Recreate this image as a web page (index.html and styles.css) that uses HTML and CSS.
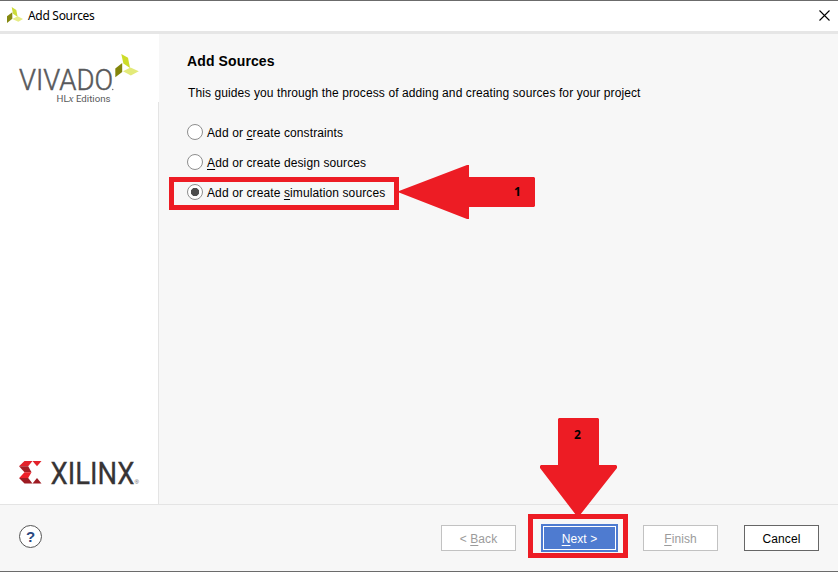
FILE: index.html
```
<!DOCTYPE html>
<html lang="en">
<head>
<meta charset="utf-8">
<title>Add Sources</title>
<link rel="stylesheet" href="styles.css">
</head>
<body>
<div class="dialog">
  <header class="titlebar">
    <svg class="app-icon" width="16" height="16" viewBox="0 0 24 24">
      <path fill="#cddc39" d="M7 0l7 4.500 2 10.500-7-5z"/>
      <path fill="#858911" d="M0 14l8-6v9.500L0 24z"/>
      <path fill="#e6ec84" d="M8 18l8-4 8 4-7 4z"/>
    </svg>
    <span class="window-title">Add Sources</span>
    <svg class="close" width="11" height="11" viewBox="0 0 11 11"><path d="M.5.5l10 10M10.500.5l-10 10" stroke="#000" stroke-width="1.100"/></svg>
  </header>
  <div class="content">
    <aside class="sidebar">
      <svg class="vivado" width="159" height="68" viewBox="0 34 159 68">
        <text class="vivado-name" x="19" y="90" textLength="94" lengthAdjust="spacingAndGlyphs">VIVADO</text>
        <circle cx="112.700" cy="89.500" r=".8" fill="#77787b"/>
        <text class="vivado-edition" x="56.500" y="101.500" textLength="54" lengthAdjust="spacingAndGlyphs">HL<tspan class="italic-x">x</tspan> Editions</text>
        <path fill="#cddc29" d="M121.300 54l6.700 3.800 2 10.200-6.600-4.400z"/>
        <path fill="#82850b" d="M115.300 68.500l6.900-5.500v9l-6.900 5.200z"/>
        <path fill="#e3ea79" d="M123 71.200l7.500-3.700 8.300 3.700-8 4.300z"/>
      </svg>
      <svg class="xilinx" width="122" height="28" viewBox="18 458 122 28">
        <path fill="#e3222b" d="M24.500 461h8l-4.300 5.200h-9.200z"/>
        <path fill="#e3222b" d="M32.500 461h9l-4.500 5.200z"/>
        <path fill="#a51e25" d="M19 466.200h9.200l3.300 6.100h-7z"/>
        <path fill="#ed2029" d="M24.500 472.300h7l-3.300 5.700h-9z"/>
        <path fill="#9e1b22" d="M19 478h9.200l4.300 5.500h-8z"/>
        <path fill="#9e1b22" d="M37 478l4.500 5.500h-9z"/>
        <text class="xilinx-name" x="50.500" y="483.500" textLength="84" lengthAdjust="spacingAndGlyphs">XILINX</text>
        <text class="registered" x="134.500" y="484">®</text>
      </svg>
    </aside>
    <main class="panel">
      <h1>Add Sources</h1>
      <p class="intro">This guides you through the process of adding and creating sources for your project</p>
      <div class="options">
        <div class="option"><i class="radio"></i><span>Add or <u>c</u>reate constraints</span></div>
        <div class="option"><i class="radio"></i><span><u>A</u>dd or create design sources</span></div>
        <div class="option"><i class="radio checked"></i><span>Add or create <u>s</u>imulation sources</span></div>
      </div>
    </main>
  </div>
  <footer class="footer">
    <span class="help">?</span>
    <div class="buttons">
      <button class="btn disabled back">&lt; <u>B</u>ack</button>
      <button class="btn primary"><span><u>N</u>ext &gt;</span></button>
      <button class="btn disabled finish"><u>F</u>inish</button>
      <button class="btn cancel">Cancel</button>
    </div>
  </footer>
  <svg class="annotations" width="838" height="572" viewBox="0 0 838 572">
    <g fill="none" stroke="#ed1c24" stroke-width="5">
      <path d="M171.500 179.500h225v28h-225z"/>
      <path d="M530.500 516.500h95v39h-95z"/>
    </g>
    <g fill="#ed1c24">
      <path d="M399 192.500v-1.500l68-26h2v12h65l1 1v28l-1 1h-65v12h-2z"/>
      <path d="M559 418h39l1 1v46h17l1 1v2l-37 47h-4l-36-47v-2l1-1h17v-46z"/>
    </g>
    <text class="step" x="514" y="196">1</text>
    <text class="step" x="574" y="439">2</text>
  </svg>
</div>
</body>
</html>
```
FILE: styles.css
```
* { box-sizing: border-box; }
body { margin: 0; font: 12px/16px "Liberation Sans", sans-serif; color: #000; }
u { text-decoration: underline; text-underline-offset: 2px; text-decoration-thickness: 1px; text-decoration-skip-ink: none; }
.dialog { position: relative; width: 838px; height: 572px; display: flex; flex-direction: column; background: #f7f7f7; border-top: 1px solid #6b6b6b; border-bottom: 1px solid #6b6b6b; overflow: hidden; }
.titlebar { height: 33px; flex: none; display: flex; align-items: center; background: #fff; border-bottom: 3px solid #e6e6e6; padding: 0 8px 0 7px; }
.app-icon { margin-top: -2px; }
.window-title { font: 12px/16px "Noto Sans", sans-serif; margin-left: 5px; letter-spacing: -.3px; }
.close { margin-left: auto; margin-top: -2px; }
.content { height: 470px; flex: none; display: flex; }
.sidebar { width: 159px; background: linear-gradient(#e4e4e4, #e4e4e4) right bottom / 1px 402px no-repeat #fff; display: flex; flex-direction: column; justify-content: space-between; padding-bottom: 18px; }
.vivado, .xilinx { overflow: visible; }
.vivado-name { font: 300 30px Roboto, sans-serif; fill: #58595b; stroke: #58595b; stroke-width: .5px; }
.vivado-edition { font: 9.5px Roboto, sans-serif; fill: #58595b; }
.italic-x { font-family: "Liberation Serif", serif; font-style: italic; font-size: 11px; }
.xilinx { margin-left: 18px; }
.xilinx-name { font: 31.5px Roboto, sans-serif; fill: #373435; stroke: #373435; stroke-width: .3px; }
.registered { font: 6px "Liberation Sans", sans-serif; fill: #555; }
.panel { flex: 1; padding: 18px 28px; }
h1 { margin: 0 0 15px; font-size: 14px; line-height: 18px; letter-spacing: .12px; }
.intro { margin: 0 0 0 1px; white-space: nowrap; letter-spacing: .1px; }
.options { margin-top: 16px; }
.option { height: 30px; display: flex; align-items: center; gap: 4px; letter-spacing: .11px; white-space: nowrap; }
.option span { padding-top: 1px; }
.radio { width: 16px; height: 16px; border: 1px solid #8e8e8e; border-radius: 50%; background: #fff; }
.radio.checked { background: radial-gradient(circle, #4d4d4d 3.800px, #fff 4.500px); }
.footer { height: 67px; flex: none; border-top: 1px solid #e4e4e4; display: flex; align-items: center; justify-content: space-between; padding: 0 19px; }
.help { width: 23px; height: 23px; margin-top: -3px; border: 1px solid #555; border-radius: 50%; background: #fff; color: #294880; font: bold 15px/21px "Liberation Sans", sans-serif; text-align: center; }
.buttons { display: flex; align-items: center; }
.btn { width: 75px; height: 26px; padding: 1px 0 0; border: 1px solid #666; background: #fff; color: #000; font: 12px/16px "Liberation Sans", sans-serif; letter-spacing: .1px; }
.disabled { border-color: #c2c2c2; color: #9b9b9b; }
.primary { width: 77px; height: 28px; margin: 0 25px; padding: 1px; border-color: #4e7bd0; background: #4e7bd0; color: #fff; }
.primary span { display: block; height: 24px; border: 1px solid #fff; line-height: 24px; }
.cancel { margin-left: 26px; }
.annotations { position: absolute; left: 0; top: -1px; }
.step { font: bold 12px "Open Sans", sans-serif; fill: #000; }
```
